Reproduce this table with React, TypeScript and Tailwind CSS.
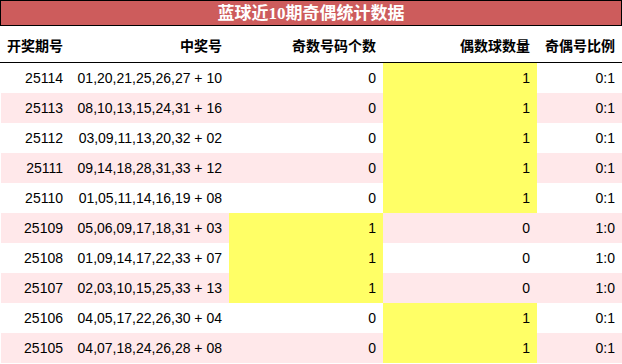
import React from 'react';

const rows = [
  { issue: '25114', nums: '01,20,21,25,26,27 + 10', odd: 0, even: 1 },
  { issue: '25113', nums: '08,10,13,15,24,31 + 16', odd: 0, even: 1 },
  { issue: '25112', nums: '03,09,11,13,20,32 + 02', odd: 0, even: 1 },
  { issue: '25111', nums: '09,14,18,28,31,33 + 12', odd: 0, even: 1 },
  { issue: '25110', nums: '01,05,11,14,16,19 + 08', odd: 0, even: 1 },
  { issue: '25109', nums: '05,06,09,17,18,31 + 03', odd: 1, even: 0 },
  { issue: '25108', nums: '01,09,14,17,22,33 + 07', odd: 1, even: 0 },
  { issue: '25107', nums: '02,03,10,15,25,33 + 13', odd: 1, even: 0 },
  { issue: '25106', nums: '04,05,17,22,26,30 + 04', odd: 0, even: 1 },
  { issue: '25105', nums: '04,07,18,24,26,28 + 08', odd: 0, even: 1 },
];

const grid = 'grid grid-cols-[70px_159px_154px_154px_85px]';

const App: React.FC = () => {
  return (
    <div className="w-[622px] h-[364px] bg-white overflow-hidden font-['Liberation_Sans','Noto_Sans_CJK_SC',sans-serif] text-black">
      {/* Title */}
      <div className="h-[26px] bg-[#cd5c5c] border border-black flex items-center justify-center">
        <span className="text-white font-bold text-[17px] leading-none font-['Liberation_Serif','Noto_Sans_CJK_SC',serif]">
          蓝球近10期奇偶统计数据
        </span>
      </div>

      {/* Header */}
      <div className={`${grid} h-[37px] border-b border-black items-center text-[14px] font-bold font-['Noto_Sans_CJK_SC',sans-serif] pt-[2px]`}>
        <div className="text-right pr-[7px]">开奖期号</div>
        <div className="text-right pr-[7px]">中奖号</div>
        <div className="text-right pr-[7px]">奇数号码个数</div>
        <div className="text-right pr-[7px]">偶数球数量</div>
        <div className="text-right pr-[7px]">奇偶号比例</div>
      </div>

      {/* Body */}
      <div>
        {rows.map((r, i) => {
          const stripe = i % 2 === 1 ? 'bg-[#ffe8ea]' : 'bg-white';
          return (
            <div key={r.issue} className={`${grid} h-[30px] text-[14px] ${stripe}`}>
              <div className="flex items-center justify-end pr-[7px] border-l border-white">{r.issue}</div>
              <div className="flex items-center justify-end pr-[7px]">{r.nums}</div>
              <div className={`flex items-center justify-end pr-[7px] ${r.odd ? 'bg-[#ffff66]' : ''}`}>{r.odd}</div>
              <div className={`flex items-center justify-end pr-[7px] ${r.even ? 'bg-[#ffff66]' : ''}`}>{r.even}</div>
              <div className="flex items-center justify-end pr-[7px]">{`${r.odd}:${r.even}`}</div>
            </div>
          );
        })}
      </div>
    </div>
  );
};

export default App;
